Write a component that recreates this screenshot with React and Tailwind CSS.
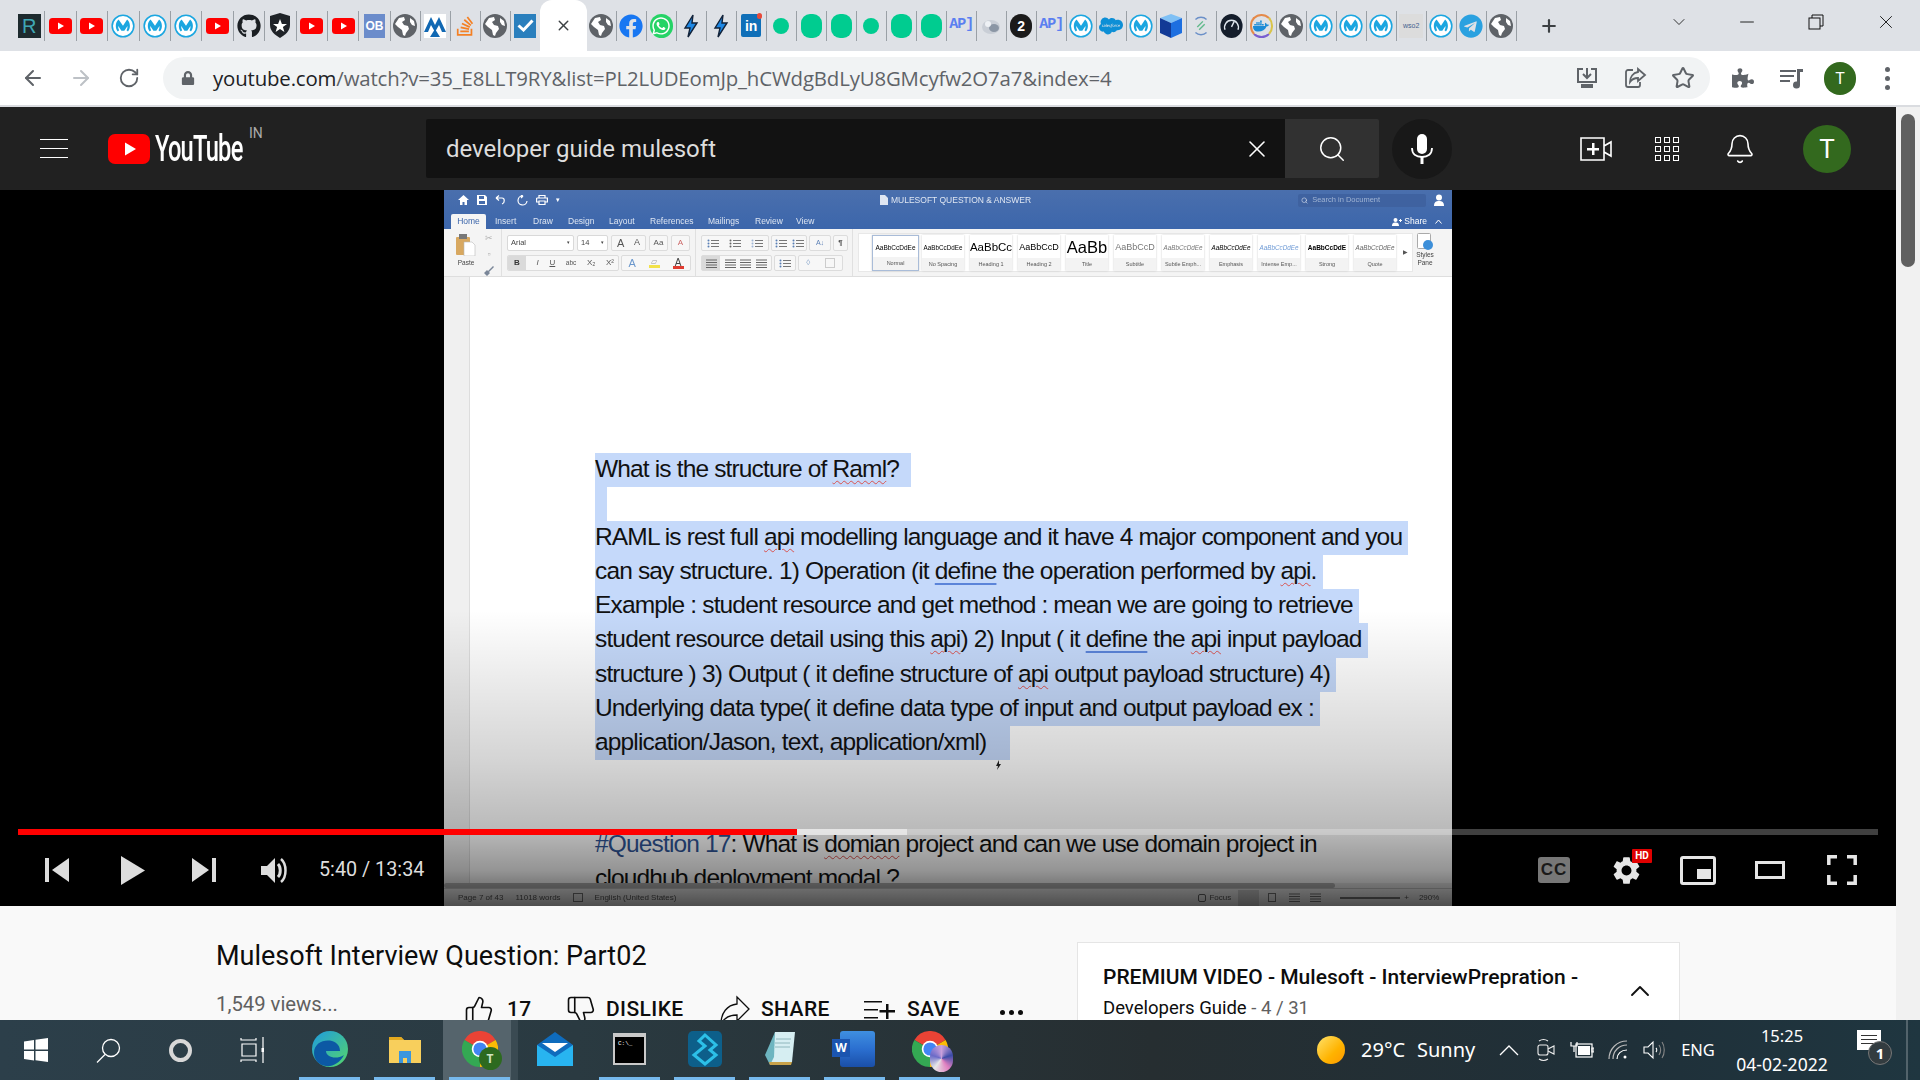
import React from "react";
import { ArrowLeft, ArrowRight, RotateCw, X, Plus, ChevronDown, Minus, Search, Bell, Star, ChevronUp, ThumbsUp, ThumbsDown } from "lucide-react";
import { FaGithub, FaStackOverflow, FaWhatsapp, FaFacebook, FaPuzzlePiece, FaDocker, FaSalesforce, FaTelegram, FaLock } from "react-icons/fa";

const Globe = () => (
  <svg width="24" height="24" viewBox="0 0 24 24"><circle cx="12" cy="12" r="12" fill="#5f6368" /><path d="M6 4l5-1 1 3-3 2 2 3 4 1 1 3-3 4-1 3-2-1-1-5-4-3-3-3zM17 4l4 3 1 5-3-1-2-3z" fill="#fff" /></svg>
);
const Yt = () => (
  <svg width="23" height="16" viewBox="0 0 23 16"><rect width="23" height="16" rx="3.5" fill="#f00" /><path d="M9 4.5l6 3.5-6 3.5z" fill="#fff" /></svg>
);
const Mule = () => (
  <svg width="24" height="24" viewBox="0 0 24 24"><circle cx="12" cy="12" r="10.8" fill="#fff" stroke="#1ba6e0" strokeWidth="1.6" /><path d="M7.6 5.6c-1.8 1.600-2.800 3.800-2.800 6.400 0 2 .7 3.900 1.900 5.400l1.500-1.100c-.8-1.200-1.100-2.700-.9-4.200l3.100 4.600h2.900l3.200-4.600c.1 1.500-.2 3-1 4.200l1.500 1.100c1.200-1.500 1.900-3.400 1.900-5.400 0-2.600-1-4.800-2.800-6.400L12 11.800z" fill="#1ba6e0" /></svg>
);
const Dot = () => <div className="w-[16px] h-[16px] rounded-full bg-[#00cc90]" />;
const Blob = () => <div className="w-[21px] h-[24px] rounded-[9px] bg-[#00cc90]" />;
const Bolt = () => (
  <svg width="16" height="24" viewBox="0 0 16 24"><path d="M10 1L2 14h5l-2 9 9-14H9z" fill="#1e88e5" stroke="#12233a" strokeWidth="1.4" /></svg>
);
const Api = () => <span className="font-['Liberation_Mono',monospace] font-bold text-[15px] tracking-[-1px] text-[#5b7ff0]">AP]</span>;

function Fav({ k }) {
  switch (k) {
    case "r": return <div className="w-[23px] h-[24px] bg-[#1d2a2e] text-[#3fa7b5] text-[20px] leading-[24px] text-center font-['Liberation_Sans',sans-serif]">R</div>;
    case "yt": return <Yt />;
    case "m": return <Mule />;
    case "gh": return <FaGithub size={24} color="#1b1f23" />;
    case "a0": return <svg width="22" height="25" viewBox="0 0 22 25"><path d="M1 3l10-3 10 3 0 9c0 6-5 10-10 13C6 22 1 18 1 12z" fill="#1f2328" /><path d="M11 6l1.900 5h5.100l-4.100 3 1.500 5-4.400-3-4.400 3 1.500-5-4.100-3h5.100z" fill="#fff" /></svg>;
    case "ob": return <div className="w-[21px] h-[24px] bg-[#6b8ccb] text-white font-bold text-[12px] leading-[24px] text-center font-['Liberation_Sans',sans-serif]">OB</div>;
    case "g": return <Globe />;
    case "mt": return <svg width="22" height="24" viewBox="0 0 22 24"><rect width="22" height="24" fill="#fff" /><path d="M0 18L7 3l4 8 4-8 7 15h-4l-3-7-4 7-4-7-3 7zM11 15l5 8H6z" fill="#1168b3" /></svg>;
    case "so": return <FaStackOverflow size={22} color="#f48024" />;
    case "chk": return <div className="w-[22px] h-[24px] bg-[#2a7fbd] flex items-center justify-center"><svg width="17" height="13" viewBox="0 0 17 13"><path d="M1.500 6.500l5 4.500 9-9.500" fill="none" stroke="#fff" strokeWidth="3" /></svg></div>;
    case "fb": return <FaFacebook size={24} color="#1877f2" />;
    case "wa": return <div className="w-[23px] h-[24px] rounded-full bg-[#25d366] flex items-center justify-center"><FaWhatsapp size={20} color="#fff" /></div>;
    case "bolt": return <Bolt />;
    case "in": return <div className="relative w-[20px] h-[23px] rounded-[2px] bg-[#0f6fb8] text-white font-bold text-[14px] leading-[25px] text-center font-['Liberation_Sans',sans-serif]">in<span className="absolute -top-[1px] -right-[1px] w-[5px] h-[6px] rounded-full bg-[#e84a3a]" /></div>;
    case "dot": return <Dot />;
    case "blob": return <Blob />;
    case "api": return <Api />;
    case "gr": return <svg width="20" height="20" viewBox="0 0 20 20"><ellipse cx="10" cy="11" rx="9" ry="7" fill="#c9ced6" /><ellipse cx="13" cy="12" rx="5" ry="4" fill="#8b96a5" /><circle cx="7" cy="8" r="3" fill="#eef1f5" /></svg>;
    case "two": return <div className="w-[22px] h-[24px] rounded-full bg-[#1b1b1b] text-white font-bold text-[14px] leading-[24px] text-center font-['Liberation_Sans',sans-serif]">2</div>;
    case "sf": return <FaSalesforce size={24} color="#0d8fd6" />;
    case "cube": return <svg width="22" height="24" viewBox="0 0 22 24"><path d="M11 0l11 4-11 5L0 4z" fill="#7fc0f5" /><path d="M0 4l11 5v15L0 19z" fill="#123a96" /><path d="M22 4L11 9v15l11-5z" fill="#1d6fe0" /></svg>;
    case "s": return <svg width="20" height="24" viewBox="0 0 20 26"><path d="M4 6a8.500 8.500 0 0 1 12 0M16 20a8.500 8.500 0 0 1-12 0" fill="none" stroke="#6a8fc8" strokeWidth="1.500" /><path d="M6 14l6-6M8 17l6-6" stroke="#5fb98a" strokeWidth="1.500" /></svg>;
    case "ga": return <svg width="23" height="24" viewBox="0 0 24 26"><ellipse cx="12" cy="13" rx="12" ry="13" fill="#141d2b" /><path d="M5 17a7.500 7.500 0 1 1 14 0" fill="none" stroke="#dfe6ee" strokeWidth="1.500" /><path d="M12 14l3-6" stroke="#dfe6ee" strokeWidth="1.500" /></svg>;
    case "dk": return <div className="w-[23px] h-[24px] rounded-full border-2 border-[#e58a4a] border-r-[#d9c44a] border-b-[#7a5fd0] flex items-center justify-center"><FaDocker size={16} color="#1d8bd6" /></div>;
    case "ws": return <div className="w-[24px] h-[24px] bg-[#dcdcdc] text-[#44618f] text-[7px] leading-[24px] text-center font-['Liberation_Sans',sans-serif]">wso2</div>;
    case "tg": return <FaTelegram size={24} color="#2aa1e0" />;
    default: return null;
  }
}

const LEFT = ["r", "yt", "yt", "m", "m", "m", "yt", "gh", "a0", "yt", "yt", "ob"];
const LEFT2 = ["g", "mt", "so", "g"];
const RIGHT = ["g", "fb", "wa", "bolt", "bolt", "in", "dot", "blob", "blob", "dot", "blob", "blob", "api", "gr", "two", "api", "m", "sf", "m", "cube", "s", "ga", "dk", "g", "m", "m", "m", "ws", "m", "tg", "g"];

function Tab({ k, wide }) {
  return (
    <div className={(wide ? "w-[31.4px]" : "w-[30px]") + " h-full flex items-center shrink-0"}>
      <div className="flex-1 flex items-center justify-center min-w-0"><Fav k={k} /></div>
      <div className="w-px h-[30px] bg-[#9aa0a6]" />
    </div>
  );
}

function TabStrip() {
  return (
    <div className="h-[51px] bg-[#dee1e6] flex items-center pl-[14px] shrink-0">
      {LEFT.map((k, i) => <Tab key={i} k={k} wide />)}
      {LEFT2.map((k, i) => <Tab key={i} k={k} />)}
      <div className="w-[29px] flex justify-center"><Fav k="chk" /></div>
      <div className="relative w-[47px] h-[51px] bg-white rounded-t-[12px] flex items-center justify-center">
        <X size={17} strokeWidth={2} color="#3c4043" />
      </div>
      {RIGHT.map((k, i) => <Tab key={i} k={k} />)}
      <div className="ml-[22px] w-[20px] flex justify-center"><Plus size={24} strokeWidth={2.6} color="#3c4043" /></div>
      <div className="ml-[110px] -mt-[8px]"><ChevronDown size={20} strokeWidth={1.1} color="#222" /></div>
      <div className="ml-[47px] -mt-[8px]"><Minus size={22} strokeWidth={1} color="#111" /></div>
      <div className="ml-[50px] -mt-[8px]"><svg width="16" height="16" viewBox="0 0 16 16" fill="none" stroke="#111" strokeWidth="1"><rect x="1" y="4" width="11" height="11" /><path d="M4 4V1h11v11h-3" /></svg></div>
      <div className="ml-[51px] -mt-[8px]"><X size={22} strokeWidth={1} color="#111" /></div>
    </div>
  );
}

function AddressBar() {
  return (
    <div className="h-[54px] bg-white flex items-center shrink-0">
      <div className="w-[57px] pl-[21px]"><ArrowLeft size={24} strokeWidth={2} color="#5f6368" /></div>
      <div className="w-[48px] flex justify-center"><ArrowRight size={24} strokeWidth={2} color="#bdc1c6" /></div>
      <div className="w-[48px] flex justify-center"><RotateCw size={22} strokeWidth={2} color="#5f6368" /></div>
      <div className="ml-[10px] w-[1547px] h-[42px] rounded-full bg-[#f1f3f4] flex items-center">
        <div className="w-[50px] flex justify-center"><FaLock size={14} color="#5f6368" /></div>
        <div className="font-['Open_Sans',sans-serif] text-[20.4px] whitespace-nowrap tracking-[-0.15px] text-[#5f6368]"><span className="text-[#202124]">youtube.com</span>/watch?v=35_E8LLT9RY&amp;list=PL2LUDEomJp_hCWdgBdLyU8GMcyfw2O7a7&amp;index=4</div>
        <div className="ml-auto flex items-center gap-[24px] pr-[15px]">
          <svg width="24" height="24" viewBox="0 0 24 24" fill="none" stroke="#5f6368" strokeWidth="2"><path d="M8 3H3v13h18V3h-5M12 2v10M8 8l4 4 4-4" /><path d="M7 19h10v2H7z" fill="#5f6368" /></svg>
          <svg width="24" height="24" viewBox="0 0 24 24" fill="none" stroke="#5f6368" strokeWidth="1.800"><path d="M10 4H5a2 2 0 0 0-2 2v13a2 2 0 0 0 2 2h10a2 2 0 0 0 2-2v-3" /><path d="M15 3l7 6-7 6v-3c-4 0-6 1-8 4 0-5 3-9 8-10z" /></svg>
          <Star size={24} strokeWidth={2} color="#5f6368" />
        </div>
      </div>
      <div className="ml-[21px] w-[24px] flex justify-center"><FaPuzzlePiece size={22} color="#5f6368" /></div>
      <div className="ml-[24px] w-[24px]"><svg width="25" height="24" viewBox="0 0 25 24" fill="#5f6368"><path d="M1 4h16v2H1zM1 9h14v2H1zM1 14h10v2H1zM18 3h6v3h-3v13a3.500 3.500 0 1 1-3-3.400z" /></svg></div>
      <div className="ml-[21px] w-[32px] h-[33px] rounded-full bg-[#33691e] text-white text-[16px] leading-[33px] text-center font-['Roboto',sans-serif]">T</div>
      <div className="ml-[29px] flex flex-col gap-[4px]"><div className="w-[5px] h-[5px] rounded-full bg-[#5f6368]" /><div className="w-[5px] h-[5px] rounded-full bg-[#5f6368]" /><div className="w-[5px] h-[5px] rounded-full bg-[#5f6368]" /></div>
    </div>
  );
}

function YtHeader() {
  return (
    <div className="h-[83px] bg-[#212121] flex items-center shrink-0 font-['Roboto',sans-serif]">
      <div className="ml-[40px] w-[28px] flex flex-col gap-[8px]"><div className="h-px bg-white" /><div className="h-px bg-white" /><div className="h-px bg-white" /></div>
      <div className="ml-[40px]"><svg width="42" height="30" viewBox="0 0 42 30"><rect width="42" height="30" rx="7" fill="#f00" /><path d="M17 8.500l11 6.500-11 6.500z" fill="#fff" /></svg></div>
      <div className="ml-[5px] w-[88px] h-[40px] leading-[40px] overflow-visible"><span className="inline-block origin-left scale-x-[0.64] text-white font-medium text-[37px] tracking-[-1.2px] whitespace-nowrap">YouTube</span></div>
      <div className="ml-[6px] -mt-[30px] text-[#aaa] text-[14px] w-[14px]">IN</div>
      <div className="ml-[163px] w-[859px] h-[59px] bg-[#121212] rounded-l-[2px] flex items-center pl-[20px] pr-[14px]">
        <span className="text-[24px] text-[#ddd]">developer guide mulesoft</span>
        <div className="ml-auto"><X size={28} strokeWidth={1.3} color="#fff" /></div>
      </div>
      <div className="w-[94px] h-[59px] bg-[#313131] rounded-r-[2px] flex items-center justify-center"><Search size={30} strokeWidth={1.2} color="#fff" /></div>
      <div className="ml-[13px] w-[60px] h-[60px] rounded-full bg-[#181818] flex items-center justify-center">
        <svg width="24" height="32" viewBox="0 0 24 32"><rect x="7" y="1" width="10" height="20" rx="5" fill="#fff" /><path d="M2 15c0 6 4 9 10 9s10-3 10-9" fill="none" stroke="#fff" strokeWidth="1.800" /><path d="M10.500 23h3v8h-3z" fill="#fff" /></svg>
      </div>
      <div className="ml-[128px]"><svg width="32" height="26" viewBox="0 0 32 26"><path d="M1 2h23v22H1zM24 10l7-4v14l-7-4" fill="none" stroke="#fff" strokeWidth="1.600" /><path d="M12 7h2.500v5H19v2.500h-4.500V19H12v-4.500H7V12h5z" fill="#fff" /></svg></div>
      <div className="ml-[43px] grid grid-cols-3 gap-[3px]">
        {[0, 1, 2, 3, 4, 5, 6, 7, 8].map((i) => <div key={i} className="w-[6px] h-[6px] border-[1.5px] border-white" />)}
      </div>
      <div className="ml-[45px]"><Bell size={32} strokeWidth={1.2} color="#fff" /></div>
      <div className="ml-[47px] w-[48px] h-[48px] rounded-full bg-[#33691e] text-white text-[26px] leading-[48px] text-center">T</div>
    </div>
  );
}

const Box = ({ w, children, cls = "" }) => <div className={w + " h-[16px] bg-white border border-[#d9d9d9] rounded-[2px] flex items-center px-[3px] text-[7.500px] text-[#444] " + cls}>{children}</div>;
const Gp = ({ w, children, cls = "" }) => <div className={w + " h-[16px] bg-[#f7f7f7] border border-[#dcdcdc] rounded-[2px] flex items-center justify-around text-[8px] text-[#555] " + cls}>{children}</div>;

const Lines = ({ c = "#666" }) => <svg width="11" height="9" viewBox="0 0 11 9" stroke={c} strokeWidth="1"><path d="M0 1h11M0 3.500h11M0 6h11M0 8.500h11" /></svg>;
const Bul = ({ c = "#5a7fb5" }) => <svg width="12" height="9" viewBox="0 0 12 9"><circle cx="1.500" cy="1.500" r="1" fill={c} /><circle cx="1.500" cy="4.500" r="1" fill={c} /><circle cx="1.500" cy="7.500" r="1" fill={c} /><path d="M4 1.500h8M4 4.500h8M4 7.500h8" stroke="#777" strokeWidth="1" /></svg>;

function StyleCard({ top, label, cls = "", w = "w-[42px]" }) {
  return (
    <div className={w + " h-[36px] bg-white shadow-[0_0_2px_#ccc] flex flex-col shrink-0 " + cls}>
      <div className="h-[23px] pt-[3px] flex items-center justify-center whitespace-nowrap">{top}</div>
      <div className="h-[13px] bg-[#f3f3f3] text-[5.500px] leading-[13px] text-center text-[#555] whitespace-nowrap">{label}</div>
    </div>
  );
}

function WordTop() {
  return (
    <div className="font-['Liberation_Sans',sans-serif] blur-[0.3px] shrink-0">
      <div className="bg-[linear-gradient(to_bottom,#4a6fad,#3c66ab)]">
        <div className="h-[24px] flex items-center pl-[14px] pb-[4px] text-white">
          <div className="flex items-center gap-[8px] w-[124px] text-[10px]">
            <svg width="11" height="10" viewBox="0 0 11 10" fill="#fff"><path d="M5.500 0L11 5H9v5H6.500V7h-2v3H2V5H0z" /></svg>
            <svg width="10" height="10" viewBox="0 0 10 10" fill="#fff"><path d="M0 0h8l2 2v8H0zM2 1v3h5V1zM2 6v3h6V6z" /></svg>
            <svg width="14" height="10" viewBox="0 0 14 10" fill="none" stroke="#fff" strokeWidth="1.200"><path d="M1 3l3-2.500M1 3l3 2.500M1 3h6c3 0 3 5 0 6" /></svg>
            <svg width="11" height="11" viewBox="0 0 11 11" fill="none" stroke="#fff" strokeWidth="1.200"><path d="M6 1a4.500 4.500 0 1 0 4 5M6 1L4 0M6 1L4 3" /></svg>
            <svg width="12" height="10" viewBox="0 0 12 10" fill="none" stroke="#fff" strokeWidth="1.200"><path d="M3 3V0.500h6V3M0.600 3h10.800v4H9M3 7H0.600V3M3 6h6v3.500H3z" /></svg>
            <span className="text-[7px]">▾</span>
          </div>
          <div className="ml-[298px] flex items-center gap-[3px] text-[8.500px] text-[#dfe6f2] whitespace-nowrap">
            <svg width="8" height="10" viewBox="0 0 8 10" fill="#dfe6f2"><path d="M0 0h5l3 3v7H0z" /></svg>
            MULESOFT QUESTION &amp; ANSWER
          </div>
          <div className="ml-[267px] w-[128px] h-[13px] bg-[#3f62a0] rounded-[2px] flex items-center px-[3px] text-[7.500px] text-[#9fb3d3] gap-[4px]"><Search size={7} color="#dfe6f2" />Search in Document</div>
          <svg className="ml-[8px]" width="11" height="12" viewBox="0 0 11 12" fill="#fff"><circle cx="5" cy="3.500" r="3" /><path d="M0 12c0-4 2-5 5-5s5 1 5 5z" /></svg>
        </div>
        <div className="h-[15px] flex items-end text-[8.500px] text-[#dde5f2] pl-[7px] leading-[15px]">
          <div className="w-[35px] h-[15px] bg-[#f5f5f5] text-[#3c66ab] text-center rounded-t-[2px]">Home</div>
          <span className="ml-[9px] w-[38px]">Insert</span>
          <span className="w-[35px]">Draw</span>
          <span className="w-[41px]">Design</span>
          <span className="w-[41px]">Layout</span>
          <span className="w-[58px]">References</span>
          <span className="w-[47px]">Mailings</span>
          <span className="w-[41px]">Review</span>
          <span className="w-[30px]">View</span>
          <span className="ml-auto mr-[10px] flex items-center gap-[2px] text-white">
            <svg width="10" height="8" viewBox="0 0 10 8" fill="#fff"><circle cx="3.500" cy="2" r="2" /><path d="M0 8c0-3 1.500-3.500 3.500-3.500S7 5 7 8zM7 2h1V1h1v1h1v1H9v1H8V3H7z" /></svg>
            Share
            <svg className="ml-[6px]" width="7" height="5" viewBox="0 0 7 5" fill="none" stroke="#fff" strokeWidth="1"><path d="M0.500 4.500L3.500 1l3 3.500" /></svg>
          </span>
        </div>
      </div>
      <div className="h-[48px] bg-[#f4f4f4] border-b border-[#dedede] flex items-stretch">
        <div className="w-[58px] border-r border-[#e0e0e0] flex pl-[9px] pt-[5px]">
          <div className="w-[26px] flex flex-col items-center">
            <svg width="20" height="22" viewBox="0 0 20 22"><rect x="0" y="3" width="14" height="18" rx="1" fill="#d8a860" /><rect x="3" y="0" width="8" height="5" fill="#777" /><path d="M8 8h8l3 3v11H8z" fill="#fff" stroke="#bbb" strokeWidth="0.600" /></svg>
            <div className="text-[6.500px] text-[#444] mt-[2px]">Paste</div>
          </div>
          <div className="ml-[5px] flex flex-col items-center gap-[7px] text-[9px] text-[#b0b0b0] leading-[9px]">
            <span>✂</span><span>▫</span><svg width="10" height="10" viewBox="0 0 10 10"><path d="M9 0L4 5l1 1 5-5zM0 7l3-3 3 3-3 3z" fill="#7a8698" /></svg>
          </div>
        </div>
        <div className="w-[194px] border-r border-[#e0e0e0] pl-[5px] pt-[6px] flex flex-col gap-[4px]">
          <div className="flex gap-[3px]">
            <Box w="w-[67px]"><span>Arial</span><span className="ml-auto text-[5px]">▾</span></Box>
            <Box w="w-[31px]"><span>14</span><span className="ml-auto text-[5px]">▾</span></Box>
            <Gp w="w-[35px]"><span className="text-[11px]">A</span><span className="text-[9px]">A</span></Gp>
            <Gp w="w-[19px]">Aa</Gp>
            <Gp w="w-[19px]"><span className="text-[#c66]">A</span></Gp>
          </div>
          <div className="flex gap-[2px]">
            <Gp w="w-[112px]" cls="!justify-between pr-[4px] overflow-hidden">
              <span className="w-[18px] h-full bg-[#dadada] text-center font-bold text-[#333] leading-[14px]">B</span>
              <span className="italic">I</span><span className="underline">U</span><span className="text-[6.500px]">abc</span><span>X₂</span><span>X²</span>
            </Gp>
            <Gp w="w-[70px]"><span className="text-[#6b97cc] text-[11px]">A</span><span className="w-[11px] h-[10px] border-b-[3px] border-[#f2e24a] text-[#999] leading-[8px] text-center">▱</span><span className="w-[11px] h-[11px] border-b-[3px] border-[#e03c31] text-[10px] leading-[9px] text-center text-[#444]">A</span></Gp>
          </div>
        </div>
        <div className="w-[157px] border-r border-[#e0e0e0] pl-[5px] pt-[6px] flex flex-col gap-[4px]">
          <div className="flex gap-[2px]">
            <Gp w="w-[68px]"><Bul /><Bul c="#666" /><Bul c="#9fb6d6" /></Gp>
            <Gp w="w-[36px]"><Bul /><Bul /></Gp>
            <Gp w="w-[22px]"><span className="text-[7px] text-[#5a7fb5]">A↓</span></Gp>
            <Gp w="w-[15px]"><span className="text-[#555] font-bold">¶</span></Gp>
          </div>
          <div className="flex gap-[2px]">
            <Gp w="w-[71px]" cls="!justify-between pr-[4px]"><span className="w-[18px] h-full bg-[#dadada] flex items-center justify-center"><Lines /></span><Lines /><Lines /><Lines /></Gp>
            <Gp w="w-[22px]"><Bul /></Gp>
            <Gp w="w-[45px]"><span className="text-[#8aa7cc]">◊</span><span className="w-[10px] h-[10px] border border-[#ccc]" /></Gp>
          </div>
        </div>
        <div className="w-[5px]" />
        <div className="my-[4px] w-[555px] bg-white border border-[#e8e8e8] flex items-center pl-[13px] gap-[6px]">
          <StyleCard w="w-[47px]" cls="border border-[#a9bcd8] -mr-[3px]" top={<span className="text-[6.500px]">AaBbCcDdEe</span>} label="Normal" />
          <StyleCard top={<span className="text-[6.300px]">AaBbCcDdEe</span>} label="No Spacing" />
          <StyleCard top={<span className="text-[11.500px]">AaBbCc</span>} label="Heading 1" />
          <StyleCard top={<span className="text-[9px]">AaBbCcD</span>} label="Heading 2" />
          <StyleCard top={<span className="text-[16.500px]">AaBb</span>} label="Title" />
          <StyleCard top={<span className="text-[9px] text-[#777]">AaBbCcD</span>} label="Subtitle" />
          <StyleCard top={<span className="text-[6.300px] italic text-[#777]">AaBbCcDdEe</span>} label="Subtle Emph..." />
          <StyleCard top={<span className="text-[6.300px] italic">AaBbCcDdEe</span>} label="Emphasis" />
          <StyleCard top={<span className="text-[6.300px] italic text-[#6f9bd6]">AaBbCcDdEe</span>} label="Intense Emp..." />
          <StyleCard top={<span className="text-[6.500px] font-bold">AaBbCcDdE</span>} label="Strong" />
          <StyleCard top={<span className="text-[6.300px] italic text-[#666]">AaBbCcDdEe</span>} label="Quote" />
          <span className="text-[6px] text-[#555] ml-[1px]">▶</span>
        </div>
        <div className="w-[24px] flex flex-col items-center pt-[4px]">
          <svg width="16" height="18" viewBox="0 0 16 18"><rect x="0.500" y="0.500" width="13" height="15" rx="1" fill="#fff" stroke="#aaa" /><circle cx="11" cy="12" r="5" fill="#3d8fd9" /></svg>
          <div className="text-[6.500px] text-[#444] text-center leading-[8px]">Styles<br />Pane</div>
        </div>
      </div>
    </div>
  );
}

const Red = ({ children }) => <span className="underline decoration-wavy decoration-[#d9534f] decoration-1 underline-offset-[3px]">{children}</span>;
const Blu = ({ children }) => <span className="underline decoration-[#5b84d9] decoration-2 underline-offset-[4px]">{children}</span>;

const HL = ({ children }) => <div className="h-[34.100px] leading-[31px] w-fit bg-[#c5d9fa] whitespace-pre">{children}</div>;

function WordDoc() {
  return (
    <div className="flex-1 min-h-0 flex bg-white">
      <div className="w-[26px] bg-[#f0f0f0] border-r border-[#dddddd] shrink-0" />
      <div className="flex-1 pl-[125px] pt-[176px] overflow-hidden font-['Liberation_Sans',sans-serif] text-[24.5px] tracking-[-0.85px] text-[#111]">
        <HL>What is the structure of <Red>Raml</Red>?  </HL>
        <div className="h-[34.100px] w-[12px] bg-[#c5d9fa]" />
        <HL>RAML is rest full <Red>api</Red> modelling language and it have 4 major component and you </HL>
        <HL>can say structure. 1) Operation (it <Blu>define</Blu> the operation performed by <Red>api</Red>. </HL>
        <HL>Example : student resource and get method : mean we are going to retrieve </HL>
        <HL>student resource detail using this <Red>api</Red>) 2) Input ( it <Blu>define</Blu> the <Red>api</Red> input payload </HL>
        <HL>structure ) 3) Output ( it define structure of <Red>api</Red> output payload structure) 4) </HL>
        <HL>Underlying data type( it define data type of input and output payload ex : </HL>
        <HL>application/Jason, text, application/xml)    </HL>
        <div className="relative h-0">
          <svg className="absolute left-[401px] top-0" width="6" height="10" viewBox="0 0 6 10" fill="#222"><path d="M3 0L0 6h2l-1 4 4-6H3z" /></svg>
        </div>
        <div className="mt-[67px] h-[34px] leading-[34px] whitespace-pre"><span className="text-[#2f5496]">#Question 17</span>: What is <Red>domian</Red> project and can we use domain project in</div>
        <div className="h-[34px] leading-[34px] whitespace-pre">cloudhub deployment modal ?</div>
      </div>
      <div className="w-[4px] shrink-0" />
    </div>
  );
}

function WordBottom() {
  return (
    <div className="shrink-0 font-['Liberation_Sans',sans-serif] blur-[0.3px]">
      <div className="h-[5px] bg-[#eeeeee]"><div className="w-[891px] h-full bg-[#b5b5b5] rounded-full" /></div>
      <div className="h-[18px] bg-[#f2f2f2] border-t border-[#c8c8c8] flex items-center text-[8px] text-[#555] pl-[14px]">
        <span>Page 7 of 43</span>
        <span className="ml-[12px]">11018 words</span>
        <span className="ml-[12px] w-[10px] h-[9px] border border-[#777]" />
        <span className="ml-[12px]">English (United States)</span>
        <span className="ml-[522px] w-[8px] h-[8px] border border-[#666] rounded-[2px]" />
        <span className="ml-[3px]">Focus</span>
        <span className="ml-[7px] w-[21px] h-[16px] bg-[#cfcfcf]" />
        <span className="ml-[9px] w-[8px] h-[9px] border border-[#777]" />
        <span className="ml-[13px]"><Lines c="#777" /></span>
        <span className="ml-[10px]"><Lines c="#777" /></span>
        <span className="ml-[19px] w-[60px] h-[2px] bg-[#777]" />
        <span className="ml-[4px]">+</span>
        <span className="ml-[10px]">290%</span>
      </div>
    </div>
  );
}

const GEAR = "M19.14 12.94c.04-.3.06-.61.06-.94 0-.32-.02-.64-.07-.94l2.03-1.58c.18-.14.23-.41.12-.61l-1.92-3.32c-.12-.22-.37-.29-.59-.22l-2.39.96c-.5-.38-1.03-.7-1.62-.94l-.36-2.54c-.04-.24-.24-.41-.48-.41h-3.84c-.24 0-.43.17-.47.41l-.36 2.54c-.59.24-1.13.57-1.62.94l-2.39-.96c-.22-.08-.47 0-.59.22L2.74 8.87c-.12.21-.08.47.12.61l2.03 1.58c-.05.3-.09.63-.09.94s.02.64.07.94l-2.03 1.58c-.18.14-.23.41-.12.61l1.92 3.32c.12.22.37.29.59.22l2.39-.96c.5.38 1.03.7 1.62.94l.36 2.54c.05.24.24.41.48.41h3.84c.24 0 .44-.17.47-.41l.36-2.54c.59-.24 1.13-.56 1.62-.94l2.39.96c.22.08.47 0 .59-.22l1.92-3.32c.12-.22.07-.47-.12-.61l-2.01-1.58zM12 15.6c-1.98 0-3.6-1.62-3.6-3.6s1.62-3.6 3.6-3.6 3.6 1.62 3.6 3.6-1.62 3.6-3.6 3.6z";

function Controls() {
  return (
    <div className="absolute left-0 right-0 bottom-0 h-[77px] font-['Roboto',sans-serif]">
      <div className="ml-[18px] w-[1860px] h-[6px] flex bg-white/25">
        <div className="w-[779px] bg-[#f00]" />
        <div className="w-[110px] bg-white/50" />
      </div>
      <div className="h-[71px] flex items-center pb-[1px] pl-[45px] pr-[39px]">
        <svg width="24" height="24" viewBox="0 0 24 24" fill="#ddd"><rect width="4" height="24" /><path d="M24 0L7 12l17 12z" /></svg>
        <svg className="ml-[52px]" width="24" height="29" viewBox="0 0 24 29" fill="#ddd"><path d="M0 0l24 14.500L0 29z" /></svg>
        <svg className="ml-[47px]" width="24" height="24" viewBox="0 0 24 24" fill="#ddd"><rect x="20" width="4" height="24" /><path d="M0 0l17 12L0 24z" /></svg>
        <svg className="ml-[45px]" width="27" height="27" viewBox="0 0 27 27"><path d="M0 9h6l8-8v25l-8-8H0z" fill="#ddd" /><path d="M17 7c3 3 3 10 0 13" fill="none" stroke="#ddd" strokeWidth="3" /><path d="M20 2c6 5 6 18 0 23" fill="none" stroke="#ddd" strokeWidth="2.500" /></svg>
        <span className="ml-[31px] text-[#ddd] text-[19.800px] whitespace-nowrap">5:40 / 13:34</span>
        <div className="ml-auto w-[32px] h-[26px] rounded-[3px] bg-[#777] flex items-center justify-center text-[17px] font-black text-[#1a1a1a] tracking-[1px] font-['Liberation_Sans',sans-serif]">CC</div>
        <div className="relative ml-[40px]">
          <svg width="33" height="33" viewBox="0 0 24 24" fill="#e6e6e6"><path d={GEAR} /></svg>
          <span className="absolute -top-[5px] left-[22px] w-[20px] h-[14px] bg-[#e00000] rounded-[1px] text-white text-[10px] font-bold leading-[14px] text-center">HD</span>
        </div>
        <div className="ml-[37px] w-[36px] h-[29px] border-[3px] border-[#e6e6e6] rounded-[3px] flex items-end justify-end pr-[2px] pb-[3px]"><div className="w-[14px] h-[10px] bg-[#e6e6e6]" /></div>
        <div className="ml-[39px] w-[30px] h-[18px] border-[3px] border-[#e6e6e6]" />
        <div className="ml-[42px]"><svg width="30" height="30" viewBox="0 0 30 30" fill="none" stroke="#e6e6e6" strokeWidth="3.500"><path d="M1.800 10V1.800H10M20 1.800h8.200V10M28.200 20v8.200H20M10 28.200H1.800V20" /></svg></div>
      </div>
    </div>
  );
}

function Video() {
  return (
    <div className="relative h-[716px] bg-black flex justify-center shrink-0 overflow-hidden">
      <div className="w-[1008px] h-full flex flex-col">
        <WordTop />
        <WordDoc />
        <WordBottom />
      </div>
      <div className="absolute left-0 right-0 bottom-0 h-[296px] bg-[linear-gradient(to_bottom,rgba(0,0,0,0)_0%,rgba(0,0,0,0.17)_51%,rgba(0,0,0,0.27)_74%,rgba(0,0,0,0.42)_88%,rgba(0,0,0,0.68)_100%)]" />
      <Controls />
    </div>
  );
}

function Below() {
  const act = "text-[21px] font-medium text-[#0d0d0d] whitespace-nowrap tracking-[0.4px]";
  return (
    <div className="h-[114px] bg-[#f9f9f9] flex overflow-hidden font-['Roboto',sans-serif] shrink-0">
      <div className="w-[1077px] pl-[216px] pt-[32px] shrink-0">
        <div className="h-[36px] leading-[36px] text-[27px] text-[#0d0d0d] whitespace-nowrap">Mulesoft Interview Question: Part02</div>
        <div className="mt-[18px] flex items-start">
          <div className="w-[248px] h-[24px] leading-[24px] text-[20.300px] text-[#606060] whitespace-nowrap">1,549 views...</div>
          <div className="flex items-center h-[30px] mt-[3px]">
            <ThumbsUp size={30} strokeWidth={1.3} color="#0d0d0d" />
            <span className={"ml-[13px] w-[59px] " + act}>17</span>
            <ThumbsDown size={30} strokeWidth={1.3} color="#0d0d0d" className="scale-x-[-1]" />
            <span className={"ml-[10px] w-[114px] " + act}>DISLIKE</span>
            <svg width="30" height="30" viewBox="0 0 30 30" fill="none" stroke="#0d0d0d" strokeWidth="1.300"><path d="M17 2l12 12-12 12v-6C9 20 4 23 1 29c0-11 6-19 16-20z" /></svg>
            <span className={"ml-[11px] w-[103px] " + act}>SHARE</span>
            <svg width="31" height="20" viewBox="0 0 31 20" fill="#0d0d0d"><path d="M0 1h18v1.500H0zM0 9h14v1.500H0zM0 17h14v1.500H0zM22 4h2.500v6H31v2.500h-6.500V19H22v-6.500h-6.500V10H22z" /></svg>
            <span className={"ml-[12px] w-[93px] " + act}>SAVE</span>
            <div className="flex gap-[4px] mt-[4px]"><div className="w-[5px] h-[5px] rounded-full bg-[#0d0d0d]" /><div className="w-[5px] h-[5px] rounded-full bg-[#0d0d0d]" /><div className="w-[5px] h-[5px] rounded-full bg-[#0d0d0d]" /></div>
          </div>
        </div>
      </div>
      <div className="mt-[36px] w-[603px] h-[140px] bg-white border border-[#e5e5e5] pl-[25px] pt-[20px] flex shrink-0">
        <div className="w-[521px]">
          <div className="text-[21px] font-medium text-[#0d0d0d] leading-[28px] whitespace-nowrap">PREMIUM VIDEO - Mulesoft - InterviewPrepration -</div>
          <div className="text-[18.500px] leading-[26px] mt-[4px] whitespace-nowrap text-[#0d0d0d]">Developers Guide <span className="text-[#606060]">- 4 / 31</span></div>
        </div>
        <div className="mt-[12px]"><ChevronUp size={32} strokeWidth={1.4} color="#111" /></div>
      </div>
    </div>
  );
}

const Chrome = ({ s = 36 }) => (
  <svg width={s} height={s} viewBox="0 0 24 24">
    <path d="M12 12L1.600 6A12 12 0 0 1 22.400 6z" fill="#ea4335" />
    <path d="M12 12L1.600 6A12 12 0 0 0 12 24z" fill="#34a853" />
    <path d="M12 12L22.400 6A12 12 0 0 1 12 24z" fill="#fbbc05" />
    <circle cx="12" cy="12" r="5.500" fill="#fff" /><circle cx="12" cy="12" r="4.400" fill="#4285f4" />
  </svg>
);

function App_({ children, under = true, active = false }) {
  return (
    <div className={"relative w-[75px] h-[60px] flex flex-col items-center shrink-0"}>
      {active && <div className="absolute left-[0.500px] right-[-0.500px] top-0 bottom-0 bg-[#55646c] border-r-[7px] border-[#3a4a52]" />}
      <div className="relative flex-1 flex items-center justify-center">{children}</div>
      <div className={"relative h-[3px] w-[61px] " + (under ? "bg-[#76b9ed]" : "")} />
    </div>
  );
}

function Taskbar() {
  return (
    <div className="h-[60px] flex items-center shrink-0 bg-[linear-gradient(to_right,#2c3f4a,#2a3a41_30%,#262e31_60%,#1f3039_85%,#1f3640)] font-['Noto_Sans',sans-serif] text-white">
      <div className="w-[72px] flex justify-center"><svg width="24" height="24" viewBox="0 0 24 24" fill="#fff"><path d="M0 3.500l10-1.500v9.500H0zM11.500 1.800L24 0v11.500H11.500zM0 13h10v9.500l-10-1.500zM11.500 13H24v11l-12.500-1.800z" /></svg></div>
      <div className="w-[72px] flex justify-center"><svg width="25" height="25" viewBox="0 0 25 25" fill="none" stroke="#fff" strokeWidth="1.300"><circle cx="15" cy="10" r="8.500" /><path d="M9 16.500L1 24.500" /></svg></div>
      <div className="w-[72px] flex justify-center"><div className="w-[23px] h-[23px] rounded-full border-[4px] border-[#d8d8d8]" /></div>
      <div className="w-[72px] flex justify-center"><svg width="24" height="26" viewBox="0 0 24 26" fill="none" stroke="#fff" strokeWidth="1.200"><path d="M1 1v2h15V1M2 7h14v12H2zM1 25v-2h15v2M23 0v11M23 15v11" /><rect x="21.500" y="11" width="3" height="4" fill="#fff" stroke="none" /></svg></div>
      <div className="w-[4px]" />
      <App_>
        <svg width="36" height="36" viewBox="0 0 36 36"><defs><linearGradient id="eg" x1="0" y1="0" x2="1" y2="1"><stop offset="0" stopColor="#1e9be0" /><stop offset="1" stopColor="#55d66a" /></linearGradient></defs><circle cx="18" cy="18" r="18" fill="url(#eg)" /><path d="M2 22C2 12 12 8 20 10c6 2 8 6 8 10H14c0 6 10 9 18 4-4 8-12 12-18 11C6 34 2 28 2 22z" fill="#0c59a4" /></svg>
      </App_>
      <App_>
        <svg width="32" height="28" viewBox="0 0 32 28"><path d="M0 2h12l3 3h17v23H0z" fill="#f8cf5c" /><path d="M0 2h12l3 3H0z" fill="#e3a91f" /><path d="M10 16h12v12h-4v-5h-4v5h-4z" fill="#3a96dd" /></svg>
      </App_>
      <App_ active>
        <div className="relative">
          <Chrome />
          <div className="absolute -right-[4px] -bottom-[3px] w-[23px] h-[23px] rounded-full bg-[#2d6a1f] text-[#cfe3c4] text-[12px] font-bold leading-[23px] text-center">T</div>
        </div>
      </App_>
      <App_ under={false}>
        <svg width="36" height="34" viewBox="0 0 36 34"><path d="M18 0l18 13v21H0V13z" fill="#0f6cbd" /><path d="M0 13l18 12 18-12v21H0z" fill="#28b4f0" /><path d="M5 11h26L18 20z" fill="#fff" /></svg>
      </App_>
      <App_>
        <div className="w-[33px] h-[32px] bg-black border-[2px] border-[#c9c9c9] border-t-[4px] text-white text-[6px] leading-[8px] pl-[3px] pt-[3px] font-['Liberation_Mono',monospace]">C:\_</div>
      </App_>
      <App_>
        <svg width="34" height="36" viewBox="0 0 34 36"><rect width="34" height="36" rx="5" fill="#0d5f8a" /><path d="M17 4l11 10-6 5 6 5-11 9-11-9 11-9-6-5z" fill="none" stroke="#2cc0e8" strokeWidth="3" /></svg>
      </App_>
      <App_>
        <svg width="34" height="36" viewBox="0 0 34 36"><path d="M12 1h20l-3 30H6z" fill="#d6eef2" /><path d="M12 1L2 24l5 10 4-8z" fill="#6db5c0" /><path d="M6 31h23l-1 3H7z" fill="#c8a24a" /><path d="M13 8h15M12 12h15M12 16h15" stroke="#7fa8b0" strokeWidth="0.800" /></svg>
      </App_>
      <App_>
        <div className="relative w-[35px] h-[36px] rounded-[3px] bg-[linear-gradient(to_bottom,#3f8fe0_0%,#2b6fd0_50%,#1a4fa8_100%)] ml-[6px]">
          <div className="absolute -left-[8px] top-[8px] w-[18px] h-[18px] bg-[#1b55b0] text-white text-[12px] font-bold leading-[18px] text-center">W</div>
        </div>
      </App_>
      <App_>
        <div className="relative">
          <Chrome />
          <div className="absolute -right-[5px] -bottom-[5px] w-[23px] h-[27px] rounded-full bg-[conic-gradient(#c9a0dc,#3b4ba8,#e080c0,#e6e6e6,#6a6ac8,#c9a0dc)]" />
        </div>
      </App_>
      <div className="w-[350px]" />
      <div className="w-[28px] h-[28px] rounded-full bg-[linear-gradient(to_bottom_right,#ffe26b,#ffb300_60%,#ff9800)]" />
      <div className="ml-[16px] text-[20px] whitespace-nowrap w-[56px]">29°C</div>
      <div className="text-[20px] w-[74px] whitespace-nowrap">Sunny</div>
      <div className="w-[36px] flex justify-center"><svg width="20" height="12" viewBox="0 0 20 12" fill="none" stroke="#fff" strokeWidth="1.300"><path d="M1 11l9-9 9 9" /></svg></div>
      <div className="w-[37px] flex justify-center"><svg width="18" height="24" viewBox="0 0 18 24" fill="none" stroke="#eee" strokeWidth="1.100"><rect x="1" y="7" width="10" height="10" rx="2" /><path d="M11 11l6-3v8l-6-3M2 3c3-2 6-2 9 0M2 21c3 2 6 2 9 0" /></svg></div>
      <div className="w-[35px] flex justify-center"><svg width="24" height="18" viewBox="0 0 24 18"><rect x="6" y="3" width="16" height="13" fill="none" stroke="#fff" strokeWidth="1.200" /><rect x="8" y="5" width="12" height="9" fill="#fff" /><path d="M22 7h2v4h-2zM1 1v4h6V1M4 5v6" stroke="#fff" strokeWidth="1.200" fill="none" /></svg></div>
      <div className="w-[37px] flex justify-center"><svg width="20" height="20" viewBox="0 0 20 20" fill="none" stroke="#bbb" strokeWidth="1.200"><path d="M1 19C1 9 9 1 19 1" /><path d="M5 19c0-8 6-14 14-14" /><path d="M9 19c0-5 4-9 10-9" stroke="#fff" /><circle cx="17" cy="17" r="1.500" fill="#fff" stroke="none" /></svg></div>
      <div className="w-[35px] flex justify-center"><svg width="22" height="20" viewBox="0 0 22 20" fill="none" stroke="#fff" strokeWidth="1.100"><path d="M1 7h4l5-5v16l-5-5H1z" /><path d="M13 8c1 1 1 3 0 4" /><path d="M16 5c2 3 2 7 0 10M19 2c3 4 3 12 0 16" stroke="#888" /></svg></div>
      <div className="w-[54px] text-center text-[16.500px]">ENG</div>
      <div className="w-[114px] flex flex-col items-center leading-[28px]">
        <span className="text-[16.500px]">15:25</span>
        <span className="text-[17.500px]">04-02-2022</span>
      </div>
      <div className="relative ml-[18px] w-[24px] h-[20px] -mt-[20px] bg-white">
        <div className="mx-[4px] mt-[5px] h-[1px] bg-[#333]" /><div className="mx-[4px] mt-[3px] h-[1px] bg-[#333]" /><div className="mx-[4px] mt-[3px] h-[1px] bg-[#333]" />
        <span className="absolute left-[11px] top-[11px] w-[24px] h-[24px] rounded-full bg-[#333c40] border border-[#777] text-white text-[15px] font-bold leading-[22px] text-center">1</span>
      </div>
      <div className="ml-[25px] w-[2px] h-[60px] bg-[#52636b]" />
    </div>
  );
}

export default function App() {
  return (
    <div className="w-[1920px] h-[1080px] overflow-hidden flex flex-col bg-[#f9f9f9]">
      <TabStrip />
      <AddressBar />
      <div className="h-[2px] bg-[#dadce0] shrink-0" />
      <div className="flex flex-1 min-h-0">
        <div className="w-[1896px] flex flex-col shrink-0 min-h-0">
          <YtHeader />
          <Video />
          <Below />
        </div>
        <div className="w-[24px] bg-[#f1f1f1] pt-[7px] flex justify-center shrink-0">
          <div className="w-[14px] h-[153px] rounded-full bg-[#606060]" />
        </div>
      </div>
      <Taskbar />
    </div>
  );
}
